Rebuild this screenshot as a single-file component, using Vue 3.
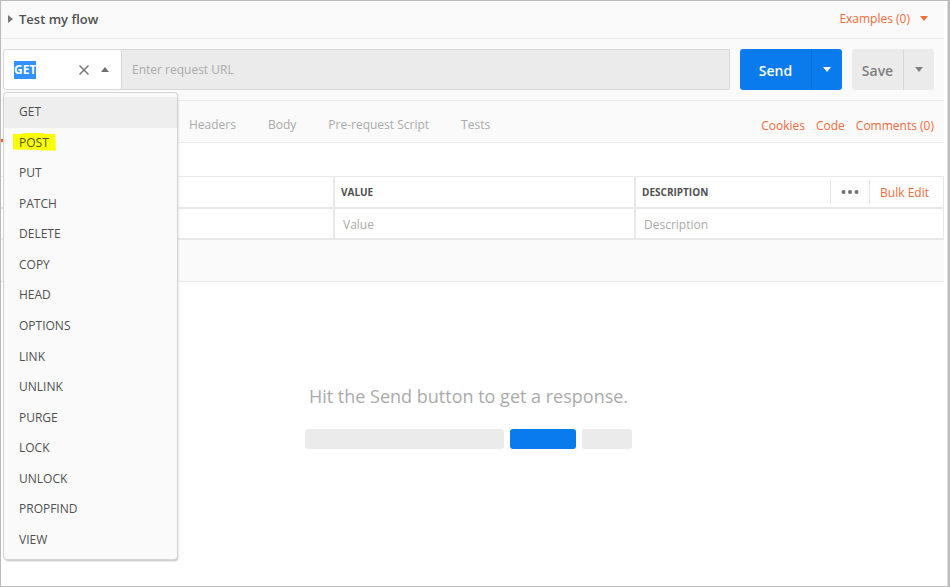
<script setup>
import { onMounted, ref } from 'vue'

const methods = [
  'GET', 'POST', 'PUT', 'PATCH', 'DELETE', 'COPY', 'HEAD', 'OPTIONS',
  'LINK', 'UNLINK', 'PURGE', 'LOCK', 'UNLOCK', 'PROPFIND', 'VIEW',
]
const tabs = ['Headers', 'Body', 'Pre-request Script', 'Tests']
const method = ref('GET')
const url = ref('')
const methodInput = ref(null)

onMounted(() => {
  methodInput.value.focus()
  methodInput.value.select()
})
</script>

<template>
  <main class="window">
    <div class="page">
      <header class="titlebar">
        <svg class="disclosure" viewBox="0 0 5 8" aria-hidden="true"><path d="M0 0L5 4L0 8Z" /></svg>
        <h1>Test my flow</h1>
        <button class="examples" type="button">
          Examples (0)
          <svg class="caret" viewBox="0 0 8 5" aria-hidden="true"><path d="M0 0H8L4 5Z" /></svg>
        </button>
      </header>

      <section class="request">
        <div class="address">
          <div class="method">
            <input ref="methodInput" v-model="method" class="method-input" type="text" aria-label="Method" spellcheck="false" />
            <button class="clear" type="button" aria-label="Clear method">
              <svg viewBox="0 0 10 10" aria-hidden="true"><path d="M0.5 0.5L9.5 9.5M9.5 0.5L0.5 9.5" /></svg>
            </button>
            <button class="toggle" type="button" aria-label="Close method list">
              <svg class="caret" viewBox="0 0 8 5" aria-hidden="true"><path d="M0 5H8L4 0Z" /></svg>
            </button>
            <ul class="menu">
              <li v-for="name in methods" :key="name">
                <button type="button" :class="{ active: name === method }" @click="method = name">
                  <svg v-if="name === 'POST'" class="marker" viewBox="0 0 43 18" aria-hidden="true">
                    <path d="M0 1H10V0H31V1H42L43 17.5H28V17L0 16.500Z" />
                  </svg>
                  <span>{{ name }}</span>
                </button>
              </li>
            </ul>
          </div>
          <input v-model="url" class="url" type="text" placeholder="Enter request URL" aria-label="Request URL" />
        </div>
        <div class="split send">
          <button class="main" type="button">Send</button>
          <button class="more" type="button" aria-label="Send options">
            <svg class="caret" viewBox="0 0 8 5" aria-hidden="true"><path d="M0 0H8L4 5Z" /></svg>
          </button>
        </div>
        <div class="split save">
          <button class="main" type="button">Save</button>
          <button class="more" type="button" aria-label="Save options">
            <svg class="caret" viewBox="0 0 8 5" aria-hidden="true"><path d="M0 0H8L4 5Z" /></svg>
          </button>
        </div>
      </section>

      <nav class="tabs">
        <span class="current"></span>
        <a v-for="tab in tabs" :key="tab" class="tab" href="#">{{ tab }}</a>
        <div class="links">
          <a href="#">Cookies</a>
          <a href="#">Code</a>
          <a href="#">Comments (0)</a>
        </div>
      </nav>

      <section class="params">
        <table>
          <colgroup>
            <col class="key-col" />
            <col class="value-col" />
            <col />
          </colgroup>
          <thead>
            <tr>
              <th></th>
              <th>VALUE</th>
              <th>
                <div class="head">
                  <span>DESCRIPTION</span>
                  <button class="dots" type="button" aria-label="Columns">
                    <svg viewBox="0 0 18 4" aria-hidden="true"><circle cx="2.500" cy="2" r="2" /><circle cx="9" cy="2" r="2" /><circle cx="15.500" cy="2" r="2" /></svg>
                  </button>
                  <a class="bulk" href="#">Bulk Edit</a>
                </div>
              </th>
            </tr>
          </thead>
          <tbody>
            <tr>
              <td></td>
              <td><input type="text" placeholder="Value" aria-label="Value" /></td>
              <td><input type="text" placeholder="Description" aria-label="Description" /></td>
            </tr>
          </tbody>
        </table>
      </section>
      <div class="band"></div>

      <section class="empty">
        <p>Hit the Send button to get a response.</p>
        <div class="bars" aria-hidden="true"><i class="wide"></i><i class="blue"></i><i class="small"></i></div>
      </section>
    </div>
  </main>
</template>

<style>
body {
  margin: 0;
}
</style>

<style scoped>
* {
  box-sizing: border-box;
}
.window {
  min-height: 100vh;
  padding-right: 4px;
  border: 1px solid #bbb;
  border-right: 2px solid #bbb;
  box-shadow: inset -1px 0 #e0e0e0;
  background: #fff;
  color: #505050;
  font: 12px/18px "Open Sans", sans-serif;
}
button,
input {
  margin: 0;
  padding: 0;
  border: 0;
  background: none;
  font: inherit;
  color: inherit;
  outline: none;
}
a {
  color: inherit;
  text-decoration: none;
}
svg {
  display: block;
  fill: currentColor;
}
.caret {
  width: 8px;
  height: 5px;
}
.titlebar {
  display: flex;
  align-items: center;
  height: 38px;
  padding: 0 16px 2px 7px;
  border-bottom: 1px solid #eaeaea;
  background: #fafafa;
}
.disclosure {
  width: 5px;
  height: 8px;
  margin-right: 6px;
  color: #777;
}
h1 {
  flex: 1;
  margin: 0;
  font-size: 13px;
  font-weight: 600;
  line-height: 16px;
}
.examples {
  display: flex;
  align-items: center;
  gap: 10px;
  color: #f26b3a;
}
.request {
  display: flex;
  gap: 10px;
  height: 62px;
  padding: 10px 10px 10px 2px;
  border-bottom: 1px solid #eaeaea;
  background: #fafafa;
}
.address {
  display: flex;
  flex: 1;
  border: 1px solid #d9d9d9;
  border-radius: 3px 0 0 3px;
  background: #ebebeb;
}
.method {
  position: relative;
  display: flex;
  align-items: center;
  width: 118px;
  padding: 0 12px 0 10px;
  border-right: 1px solid #d4d4d4;
  border-radius: 3px;
  background: #fff;
  color: #707070;
}
.method-input {
  flex: 1;
  min-width: 0;
  font-weight: 700;
}
.method-input::selection {
  background: #3390ff;
  color: #fff;
}
.clear {
  margin-right: 12px;
}
.clear svg {
  width: 10px;
  height: 10px;
  fill: none;
  stroke: #777;
  stroke-width: 1.500;
}
.menu {
  position: absolute;
  z-index: 2;
  top: 43px;
  left: 0;
  display: grid;
  grid-auto-rows: 1fr;
  width: 173px;
  height: 466px;
  margin: 0;
  padding: 4px 0;
  border-radius: 3px;
  background: #fafafa;
  box-shadow: 0 0 0 1px #d4d4d4, 1px 2px 2px #bbb;
  color: #505050;
  list-style: none;
}
.menu li {
  display: flex;
}
.menu button {
  position: relative;
  flex: 1;
  padding-left: 15px;
  text-align: left;
}
.menu .active {
  background: #eee;
}
.menu span {
  position: relative;
}
.marker {
  position: absolute;
  top: 5px;
  left: 9px;
  width: 43px;
  height: 18px;
  color: #faff00;
}
.url {
  flex: 1;
  min-width: 0;
  padding: 0 10px;
}
::placeholder {
  color: #aaa;
  opacity: 1;
}
.split {
  display: flex;
  border-radius: 3px;
  overflow: hidden;
}
.main {
  padding-top: 2px;
  font-size: 14px;
  font-weight: 600;
}
.more {
  display: flex;
  align-items: center;
  justify-content: center;
  width: 31px;
  border-left: 1px solid #d9d9d9;
}
.send {
  background: #097bed;
  color: #fff;
}
.send .main {
  width: 71px;
}
.send .more {
  border-color: #086dd5;
}
.save {
  background: #ebebeb;
  color: #808080;
}
.save .main {
  width: 51px;
}
.tabs {
  display: flex;
  align-items: center;
  gap: 32px;
  height: 42px;
  padding-right: 10px;
  border-bottom: 1px solid #eaeaea;
  background: #fafafa;
  color: #aaa;
}
.tab {
  padding-top: 6px;
}
.current {
  align-self: flex-end;
  width: 156px;
  height: 3px;
  background: #f05a28;
}
.links {
  display: flex;
  gap: 11px;
  margin-left: auto;
  padding-top: 8px;
  color: #f26b3a;
}
.params {
  padding-top: 33px;
}
table {
  width: 100%;
  border-spacing: 0;
  border-top: 1px solid #eaeaea;
  table-layout: fixed;
}
.key-col {
  width: 334px;
}
.value-col {
  width: 301px;
}
th,
td {
  height: 32px;
  padding: 0 0 0 6px;
  border-right: 2px solid #e8e8e8;
  border-bottom: 2px solid #e8e8e8;
  text-align: left;
}
th:last-child,
td:last-child {
  border-right-width: 1px;
}
td {
  height: 31px;
  padding: 2px 0 0 8px;
}
th {
  font-size: 10px;
  font-weight: 700;
}
td input {
  display: block;
  width: 100%;
}
.head {
  display: flex;
  align-items: center;
}
.head span {
  flex: 1;
}
.dots {
  height: 22px;
  padding: 0 10px;
  border-left: 1px solid #e4e4e4;
  border-right: 1px solid #e4e4e4;
  color: #707070;
}
.dots svg {
  width: 18px;
  height: 4px;
}
.bulk {
  padding: 2px 14px 0 10px;
  color: #f26b3a;
  font-size: 12px;
  font-weight: 400;
}
.band {
  height: 42px;
  border-bottom: 1px solid #eaeaea;
  background: #fafafa;
}
.empty {
  display: flex;
  flex-direction: column;
  align-items: center;
  padding: 101px 8px 0 0;
}
.empty p {
  margin: 0;
  color: #aaa;
  font-size: 18px;
  line-height: 26px;
}
.bars {
  display: flex;
  gap: 6px;
  margin-top: 20px;
}
.bars i {
  height: 20px;
  border-radius: 3px;
  background: #ebebeb;
}
.bars .wide {
  width: 199px;
}
.bars .blue {
  width: 66px;
  background: #097bed;
}
.bars .small {
  width: 50px;
}
</style>
